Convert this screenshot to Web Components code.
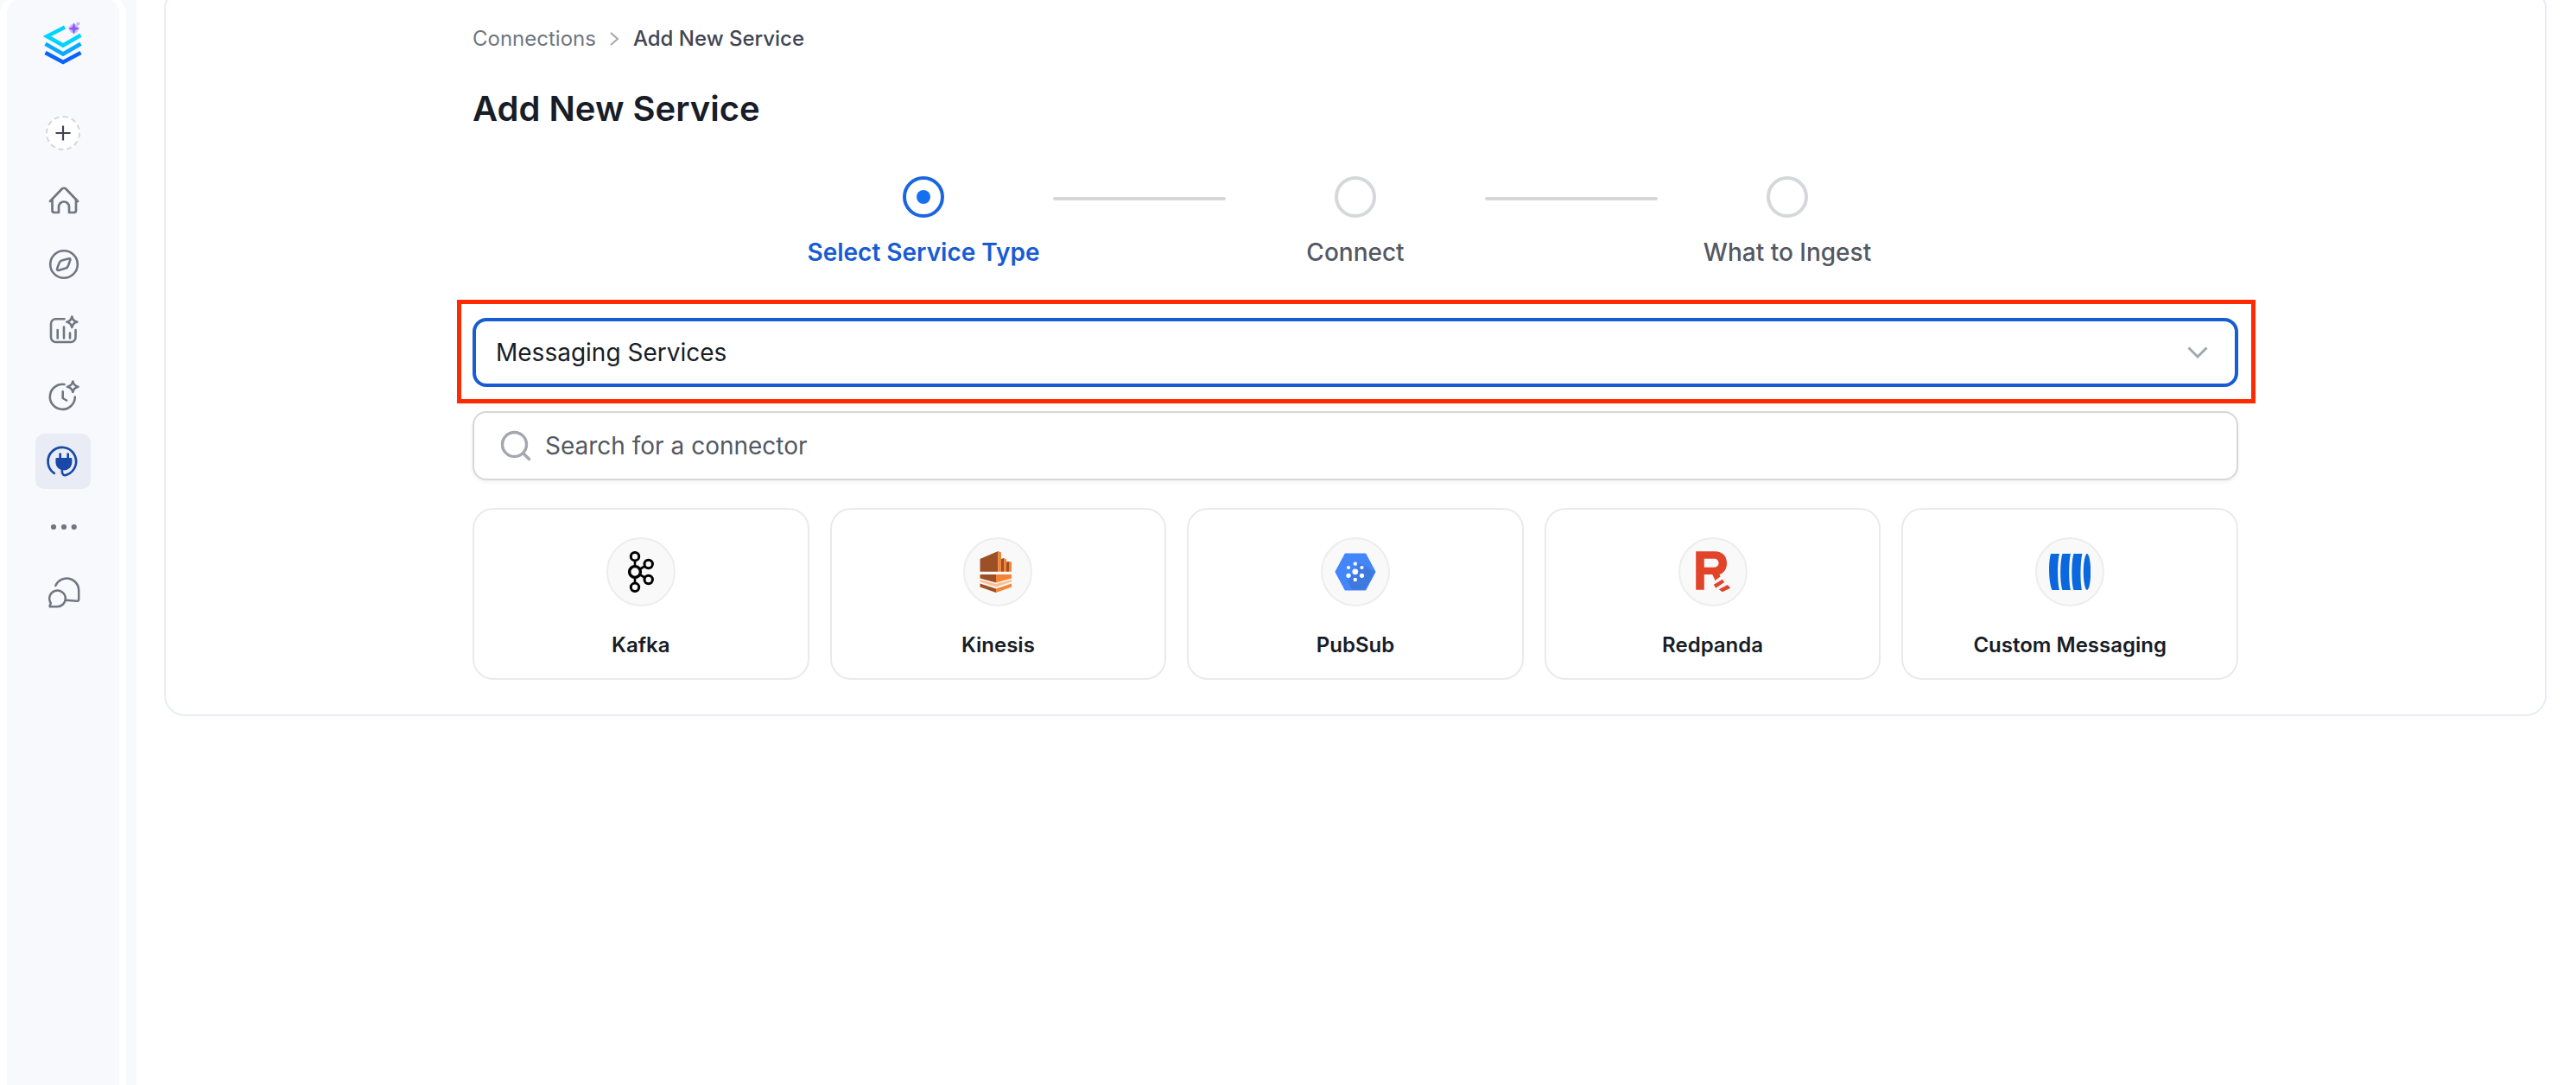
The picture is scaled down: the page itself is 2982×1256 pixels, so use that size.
<!DOCTYPE html>
<html lang="en"><head><meta charset="utf-8"><title>Add New Service</title>
<style>
html,body{margin:0;padding:0;background:#fff;height:100%;overflow:hidden}
body{font-family:Inter,"Noto Sans",sans-serif;color:#181d27}
</style></head>
<body>
<app-shell>
  <side-nav slot="nav">
    <nav-item kind="logo"><svg width="64" height="64" viewBox="0 0 64 64" fill="none"><path d="M32 14.5 L13.5 24 L32 34.5 L50.5 24" stroke="#00d4ff" stroke-width="4.6" stroke-linecap="square"/><path d="M13.5 34 L32 44.5 L50.5 34" stroke="#0aa8ff" stroke-width="4.6" stroke-linecap="square"/><path d="M13.5 44 L32 54 L50.5 44" stroke="#0a62ff" stroke-width="4.6" stroke-linecap="square"/><circle cx="44.5" cy="15" r="5.5" fill="#a78bfa" opacity=".55"/><path d="M44.5 8 L46.3 13.2 L51.5 15 L46.3 16.8 L44.5 22 L42.7 16.8 L37.5 15 L42.7 13.2Z" fill="#8b5cf6"/><circle cx="49.5" cy="9.5" r="2" fill="#c4b5fd"/></svg></nav-item>
    <nav-item kind="add"><svg width="24" height="24" viewBox="0 0 24 24" fill="none" stroke="#414651" stroke-width="2.2"><path d="M12 3.5V20.5M3.5 12H20.5"/></svg></nav-item>
    <nav-item><svg width="40" height="40" viewBox="0 0 40 40" fill="none" stroke="#717680" stroke-width="2.7" stroke-linecap="round" stroke-linejoin="round"><g transform="translate(0 2)"><path d="M5 21 L18.6 6.8 a3.4 3.4 0 0 1 4.8 0 L37 21"/><path d="M7.5 19 V31.5 a2.5 2.5 0 0 0 2.5 2.5 H15 V27.5 a6 6 0 0 1 12 0 V34 H32.5 a2.5 2.5 0 0 0 2.5-2.5 V19"/></g></svg></nav-item>
    <nav-item><svg width="40" height="40" viewBox="0 0 40 40" fill="none" stroke="#717680" stroke-width="2.6" stroke-linejoin="round"><circle cx="21" cy="20" r="15.8"/><path d="M14.8 27 C13.3 27 12.7 26 13.1 25 L15.5 18.5 C16 17 17 16 18.5 15.5 L27 13.3 C28 13 28.7 13.8 28.3 15 L26 21.5 C25.5 23 24.5 24.2 23 24.6 Z"/></svg></nav-item>
    <nav-item><svg width="40" height="40" viewBox="0 0 40 40" fill="none" stroke="#717680" stroke-width="2.6" stroke-linecap="round" stroke-linejoin="round"><path d="M21.5 7.3 H11.5 a5.5 5.5 0 0 0 -5.5 5.5 V28.5 a5.5 5.5 0 0 0 5.5 5.5 H29 a5.5 5.5 0 0 0 5.5-5.5 V20"/><path d="M13.7 20V29.5M21 16.5V29.5M28 23.5V29.5"/><path d="M30.3 4.5 C31 8 32.5 10 36.3 10.7 C32.5 11.4 31 13.2 30.3 17 C29.6 13.2 28 11.4 24.3 10.7 C28 10 29.6 8 30.3 4.5Z"/></svg></nav-item>
    <nav-item><svg width="40" height="40" viewBox="0 0 40 40" fill="none" stroke="#717680" stroke-width="2.6" stroke-linecap="round" stroke-linejoin="round"><path d="M21.5 7 A14.5 14.5 0 1 0 33.8 21.5"/><path d="M19.7 15.3V23L24 25.5"/><path d="M31.3 3.5 C32 7 33.5 8.8 37.5 9.7 C33.5 10.5 32 12.2 31.3 16 C30.6 12.2 29 10.5 25 9.7 C29 8.8 30.6 7 31.3 3.5Z"/></svg></nav-item>
    <nav-item active><svg width="40" height="40" viewBox="0 0 40 40" fill="none"><path d="M9.8 33.8 A16.3 16.3 0 1 1 24.5 35.5 C21 37 18.5 35.5 18.8 31" stroke="#1849a9" stroke-width="2.7" stroke-linecap="round"/><path d="M15.3 11.5 a1.35 1.35 0 0 1 2.7 0 V16 H24.3 V11.5 a1.35 1.35 0 0 1 2.7 0 V16 H29 a1.4 1.4 0 0 1 1.4 1.4 V21 C30.4 26 26.5 30.5 21 30.5 C15.5 30.5 11.4 26 11.4 21 V17.4 A1.4 1.4 0 0 1 12.8 16 H15.3Z" fill="#1849a9"/></svg></nav-item>
    <nav-item><svg width="40" height="40" viewBox="0 0 40 40" fill="#717680"><circle cx="9" cy="20" r="3.1"/><circle cx="21" cy="20" r="3.1"/><circle cx="32.7" cy="20" r="3.1"/></svg></nav-item>
    <nav-item><svg width="40" height="40" viewBox="0 0 40 40" fill="none" stroke="#717680" stroke-width="2.5" stroke-linecap="round" stroke-linejoin="round"><path d="M11.3 12 A14 14 0 0 1 38.2 17 V27.5 C38.2 29.2 37.8 29.8 36.3 29.7 L22.8 28.7"/><path d="M22.8 27 A9.3 9.3 0 0 1 13.5 36.2 H6 C4.6 36.6 4.2 35.7 4.8 34.6 L5.9 32.3 A9.3 9.3 0 1 1 22.8 27Z"/></svg></nav-item>
  </side-nav>
  <panel-card slot="main">
    <bread-crumb><span>Connections</span><span slot="current">Add New Service</span></bread-crumb>
    <page-title>Add New Service</page-title>
    <step-bar>
      <step-item state="active">Select Service Type</step-item>
      <step-line></step-line>
      <step-item>Connect</step-item>
      <step-line></step-line>
      <step-item>What to Ingest</step-item>
    </step-bar>
    <service-select highlighted>Messaging Services</service-select>
    <search-box placeholder="Search for a connector"></search-box>
    <connector-grid>
      <connector-card name="Kafka"><svg width="48" height="48" viewBox="0 0 48 48" fill="none" stroke="#000"><path d="M17 6V41.5M17 24L32.7 15M17 24L32.7 33" stroke-width="2.6"/><g fill="#f9f9f9" stroke-width="3"><circle cx="17" cy="6.2" r="4.7"/><circle cx="17" cy="41.8" r="4.7"/><circle cx="32.7" cy="15" r="4.7"/><circle cx="32.7" cy="33" r="4.7"/><circle cx="17" cy="24" r="6.4" stroke-width="3.4"/></g></svg></connector-card>
      <connector-card name="Kinesis"><svg width="48" height="48" viewBox="0 0 48 48"><path d="M3.5 9L24.5 0V23.7H3.5Z" fill="#9d5025"/><path d="M24.5 0L28 1.5V23.7H24.5Z" fill="#f58536"/><path d="M28 9L31 8V23.7H28Z" fill="#9d5025"/><path d="M31 8L34 9.5V23.7H31Z" fill="#f58536"/><path d="M34 12.5L37 12V23.7H34Z" fill="#9d5025"/><path d="M37 12L40 12.5V23.7H37Z" fill="#f58536"/><path d="M3.5 27H22V36.5L3.5 31.5Z" fill="#9d5025"/><path d="M22 27H40V31.5L22 36.5Z" fill="#f58536"/><path d="M3.5 33L22 38L40 33V35.5L22 41.5L3.5 35.5Z" fill="#fcbf92"/><path d="M3.5 37.5L22 43.5V48L3.5 41.5Z" fill="#9d5025"/><path d="M22 43.5L40 37.5V41.5L22 48Z" fill="#f58536"/></svg></connector-card>
      <connector-card name="PubSub"><svg width="48" height="48" viewBox="0 0 48 48"><path d="M12.5 3.5H35.5L46.5 24L35.5 44.5H12.5L1.5 24Z" fill="#4386fa" stroke="#4386fa" stroke-width="2" stroke-linejoin="round"/><path d="M29 14L46.5 24L35.5 44.5H20L15 35Z" fill="#3e79de"/><g fill="#fff"><circle cx="23.8" cy="23.8" r="3.4"/><circle cx="23.8" cy="14.6" r="2.2"/><circle cx="23.8" cy="33" r="2.2"/><circle cx="16" cy="19" r="2.1"/><circle cx="31.5" cy="19" r="2.1"/><circle cx="16" cy="28.3" r="2.6"/><circle cx="31.5" cy="28.3" r="2.6"/></g></svg></connector-card>
      <connector-card name="Redpanda"><svg width="48" height="48" viewBox="0 0 48 48" fill="#e2442a"><path fill-rule="evenodd" d="M4.2 .3H26C35 .3 40 6 40 14C40 21 36.5 25.5 31.5 27L32.5 29.5L26.5 34L23.2 27H13.8V44.7H4.2ZM13.8 8.7V18.7H25C28.5 18.7 30.5 16.5 30.5 13.7C30.5 10.8 28.5 8.7 25 8.7Z"/><path d="M24.8 38.7L34.8 32.7L37.2 36L27.2 42.7Z"/><path d="M30.8 44.3L40.8 39L44.2 42.7L34.8 47.3Z"/></svg></connector-card>
      <connector-card name="Custom Messaging"><svg width="48" height="48" viewBox="0 0 48 48" fill="#0b67dd"><path d="M2 3H12C9.5 12 9.5 36 12 45H3.5C-.8 36 -.8 12 2 3Z"/><path d="M15.5 3H25C22.7 12 22.7 36 25 45H15.5C12.5 36 12.5 12 15.5 3Z"/><path d="M28.5 3H38.5C36 12 36 36 38 45H28.5C25.7 36 25.7 12 28.5 3Z"/><path d="M44 3C46.5 3 48.2 14 48.2 24C48.2 34 46.5 45 44 45C41.5 45 39.8 34 39.8 24C39.8 14 41.5 3 44 3Z"/></svg></connector-card>
    </connector-grid>
  </panel-card>
</app-shell>
<script>
function def(name,css,html,extra){
  customElements.define(name,class extends HTMLElement{
    constructor(){super();const r=this.attachShadow({mode:"open"});r.innerHTML="<style>"+css+"</style>"+html;}
    connectedCallback(){if(extra)extra.call(this,this.shadowRoot);}
  });
}
def("app-shell",
 ":host{display:flex;height:1256px;overflow:hidden;background:#f8f9fd;align-items:flex-start}"+
 ".side{flex:0 0 130px;height:1266px;margin-top:-4px;padding:3px 8px 0;background:#fff;border-radius:20px 20px 0 0;}"+
 ".main{flex:1;margin-left:12px;height:1296px;margin-top:-20px;padding:6px 34px 0 32px;background:#fff;border-radius:24px 0 0 0}",
 '<div class="side"><slot name="nav"></slot></div><div class="main"><slot name="main"></slot></div>');
def("side-nav",
 ":host{display:flex;flex-direction:column;align-items:center;gap:12px;height:1300px;box-sizing:border-box;padding-top:19px;background:#f8f9fd;border-radius:16px 16px 0 0}",
 "<slot></slot>");
def("nav-item",
 ":host{display:flex;flex:0 0 64px;width:64px;height:64px;align-items:center;justify-content:center;border-radius:10px}"+
 ":host([active]){background:#e9ecf5}"+
 ":host([kind=logo]){margin-bottom:28px}"+
 ".ring{display:flex;align-items:center;justify-content:center;width:40px;height:40px;box-sizing:border-box;border:2px dashed #d5d7da;border-radius:50%;background:#fff}"+
 "::slotted(svg){display:block}",
 "<slot></slot>",
 function(r){if(this.getAttribute("kind")==="add"&&!r.querySelector(".ring")){const d=document.createElement("div");d.className="ring";d.appendChild(document.createElement("slot"));r.replaceChild(d,r.querySelector("slot"));}});
def("panel-card",
 ":host{display:block;box-sizing:border-box;width:100%;padding:39px 0 40px;border:2px solid #eaecf5;border-radius:24px;background:#fff}"+
 ".in{width:2044px;margin:0 auto;display:flex;flex-direction:column}",
 '<div class="in"><slot></slot></div>');
def("bread-crumb",
 ":host{display:flex;align-items:center;height:36px;font-size:24px;line-height:36px;color:#717680}"+
 "svg{margin:0 16px 0 15px;display:block}"+
 ".cur{color:#414651;font-weight:500}",
 '<slot></slot><svg width="12" height="18" viewBox="0 0 12 18" fill="none" stroke="#a4a7ae" stroke-width="2"><path d="M2 2l8 7-8 7"/></svg><span class="cur"><slot name="current"></slot></span>');
def("page-title",
 ":host{display:block;margin-top:35px;font-size:40px;line-height:56px;font-weight:600;color:#181d27}",
 "<slot></slot>");
def("step-bar",
 ":host{display:flex;justify-content:center;margin-top:50px}",
 "<slot></slot>");
def("step-item",
 ":host{display:flex;flex-direction:column;align-items:center;flex:0 0 300px;font-size:28px;line-height:36px;font-weight:500;color:#535862}"+
 ":host([state=active]){color:#175cd3;font-weight:600}"+
 ".c{box-sizing:border-box;width:48px;height:48px;border:4px solid #d5d7da;border-radius:50%;display:flex;align-items:center;justify-content:center;margin-bottom:22px}"+
 ":host([state=active]) .c{border-color:#1a66e0}"+
 ":host([state=active]) .c::after{content:'';width:16px;height:16px;border-radius:50%;background:#1570ef}",
 '<div class="c"></div><slot></slot>');
def("step-line",
 ":host{display:block;flex:0 0 200px;height:4px;margin-top:24px;background:#d5d7da;border-radius:2px}",
 "");
def("service-select",
 ":host{display:flex;position:relative;align-items:center;justify-content:space-between;box-sizing:border-box;height:80px;margin-top:58px;padding:0 31px 0 23px;border:4px solid #175cd3;border-radius:16px;background:#fff;font-size:28px;color:#181d27}"+
 ".hl{display:none;position:absolute;left:-22px;right:-24px;top:-25px;bottom:-23px;border:5px solid #ff2a00;pointer-events:none}"+
 ":host([highlighted]) .hl{display:block}"+
 "svg{display:block}",
 '<span><slot></slot></span><svg width="24" height="14" viewBox="0 0 24 14" fill="none" stroke="#a4a7ae" stroke-width="3"><path d="M1.5 1.5L12 12L22.5 1.5"/></svg><div class="hl"></div>');
def("search-box",
 ":host{display:flex;align-items:center;box-sizing:border-box;height:80px;margin-top:28px;padding:0 0 0 30px;border:2px solid #d5d7da;border-radius:16px;background:#fff;box-shadow:0 2px 4px rgba(10,13,18,.06);font-size:28px;color:#535862}"+
 "svg{display:block;margin-right:16px;flex:none}",
 '<svg width="36" height="36" viewBox="0 0 36 36" fill="none" stroke="#a4a7ae" stroke-width="3.4" stroke-linecap="round"><circle cx="16.5" cy="16.5" r="14"/><path d="M27 27L33.5 33.5"/></svg><span id="t"></span>',
 function(r){r.getElementById("t").textContent=this.getAttribute("placeholder");});
def("connector-grid",
 ":host{display:grid;grid-template-columns:repeat(5,1fr);gap:24px;margin-top:32px}",
 "<slot></slot>");
def("connector-card",
 ":host{display:flex;flex-direction:column;align-items:center;box-sizing:border-box;height:199px;padding-top:32px;border:2px solid #e9eaeb;border-radius:24px;background:#fff;font-size:24px;line-height:36px;font-weight:600;color:#181d27}"+
 ".i{box-sizing:border-box;width:80px;height:80px;border:2px solid #ededed;border-radius:50%;background:#f9f9f9;display:flex;align-items:center;justify-content:center;margin-bottom:27px}"+
 "::slotted(svg){display:block;flex:none}",
 '<div class="i"><slot></slot></div><span id="n"></span>',
 function(r){r.getElementById("n").textContent=this.getAttribute("name");});
</script>
</body></html>
